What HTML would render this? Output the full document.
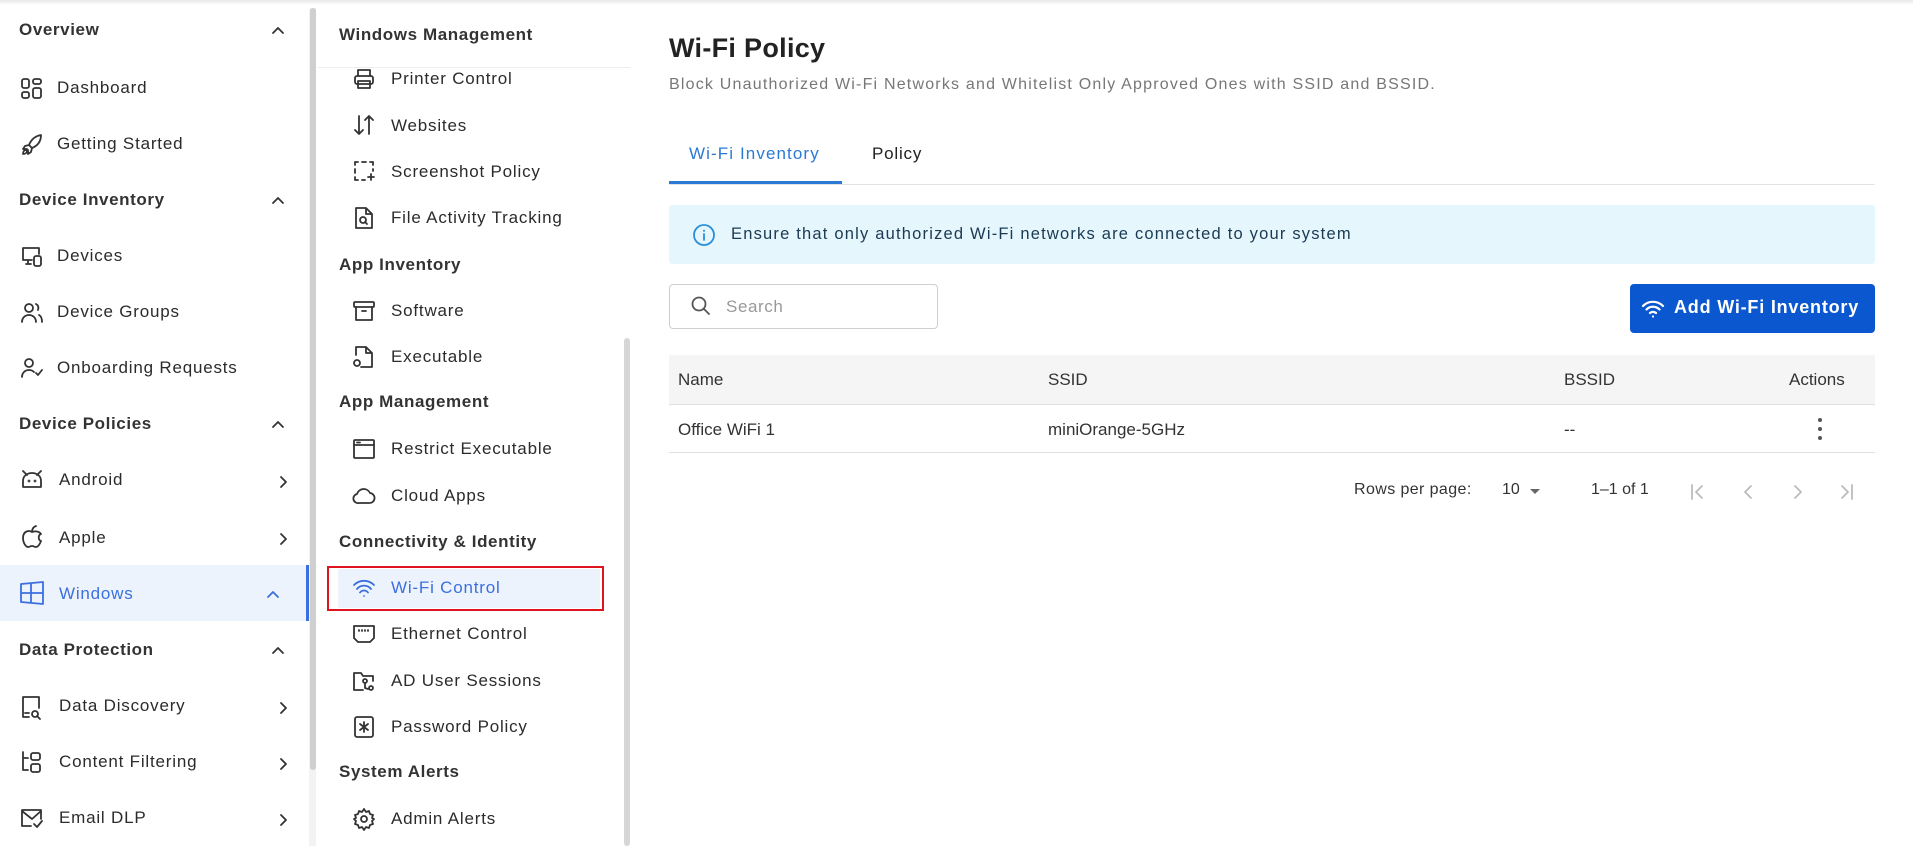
<!DOCTYPE html>
<html><head><meta charset="utf-8"><style>
*{box-sizing:border-box;margin:0;padding:0}
body{width:1913px;height:846px;overflow:hidden;background:#fff;font-family:"Liberation Sans",sans-serif;color:#2b2b2b;position:relative}
.a{position:absolute;white-space:nowrap}
.ls{font-size:17px;line-height:20px;letter-spacing:0.8px}
.hd{font-size:17px;font-weight:bold;color:#333;letter-spacing:0.6px}
svg{position:absolute;fill:none;stroke:#333;stroke-width:1.8;stroke-linecap:round;stroke-linejoin:round}
</style></head><body>
<div class="a" style="left:0;top:0;width:1913px;height:5px;background:linear-gradient(#e8e8e8,#fff)"></div>
<!-- left sidebar -->
<div class="a" style="left:0;top:565px;width:308px;height:56px;background:#edf3fc"></div>
<div class="a" style="left:306px;top:565px;width:4px;height:56px;background:#3b6fe0"></div>
<div class="a" style="left:309px;top:8px;width:7px;height:838px;background:#f3f3f3"></div>
<div class="a" style="left:310px;top:8px;width:6px;height:762px;background:#cfcfcf;border-radius:3px"></div>

<div class="a hd" style="left:19px;top:20px">Overview</div>
<svg style="left:271px;top:25px" width="14" height="10"><path d="M2 8l5-5 5 5"/></svg>
<svg style="left:20px;top:77px" width="24" height="24"><rect x="2" y="2" width="7" height="9" rx="2"/><rect x="13" y="2" width="8" height="5" rx="2"/><rect x="2" y="15" width="7" height="6" rx="2"/><rect x="13" y="11" width="8" height="10" rx="2"/></svg>
<div class="a ls" style="left:57px;top:78px">Dashboard</div>
<svg style="left:20px;top:133px" width="24" height="24"><path d="M21 2c-6 1-10 5-12 10l3 3c5-2 9-6 9-13zM9 12l-4 1-2 3 4 0M12 15l-1 4-3 2 0-4M6 17c-2 0-3 2-3 4 2 0 4-1 4-3"/></svg>
<div class="a ls" style="left:57px;top:134px">Getting Started</div>
<div class="a hd" style="left:19px;top:190px">Device Inventory</div>
<svg style="left:271px;top:195px" width="14" height="10"><path d="M2 8l5-5 5 5"/></svg>
<svg style="left:20px;top:244px" width="24" height="24"><path d="M12 16H3V4h16v6M6 20h5M8 16v4"/><rect x="14" y="12" width="7" height="10" rx="2"/></svg>
<div class="a ls" style="left:57px;top:246px">Devices</div>
<svg style="left:20px;top:301px" width="24" height="24"><circle cx="9" cy="7" r="4"/><path d="M2 21c0-4 3-7 7-7s7 3 7 7M16 3c2 1 3 3 2 6M19 14c2 1 3 4 3 7"/></svg>
<div class="a ls" style="left:57px;top:302px">Device Groups</div>
<svg style="left:20px;top:356px" width="24" height="24"><circle cx="9" cy="7" r="4"/><path d="M2 21c0-4 3-7 7-7 2 0 4 1 5 2M16 17l2 2 4-5"/></svg>
<div class="a ls" style="left:57px;top:358px">Onboarding Requests</div>
<div class="a hd" style="left:19px;top:414px">Device Policies</div>
<svg style="left:271px;top:419px" width="14" height="10"><path d="M2 8l5-5 5 5"/></svg>
<svg style="left:20px;top:469px" width="24" height="20"><path d="M3 18v-6c0-5 4-8 9-8s9 3 9 8v6zM3 2l4 4M21 2l-4 4"/><circle cx="9" cy="12" r=".5"/><circle cx="15" cy="12" r=".5"/></svg>
<div class="a ls" style="left:59px;top:470px">Android</div>
<svg style="left:279px;top:475px" width="10" height="14"><path d="M2 2l5 5-5 5"/></svg>
<svg style="left:20px;top:524px" width="24" height="26"><path d="M12 8c-3-2-9-1-9 6 0 5 3 9 5 9s2-1 4-1 2 1 4 1c2 0 4-3 5-6-3-1-3-6 0-7-2-3-6-3-9-2zM12 8c0-3 1-5 4-6"/></svg>
<div class="a ls" style="left:59px;top:528px">Apple</div>
<svg style="left:279px;top:532px" width="10" height="14"><path d="M2 2l5 5-5 5"/></svg>
<svg style="left:19px;top:580px" width="26" height="26"><path stroke="#3b6fe0" d="M2 4l22-2v22L2 22zM2 13h22M12 3v20"/></svg>
<div class="a ls" style="left:59px;top:584px;color:#3b6fe0">Windows</div>
<svg style="left:266px;top:589px" width="14" height="10"><path stroke="#3b6fe0" d="M2 8l5-5 5 5"/></svg>
<div class="a hd" style="left:19px;top:640px">Data Protection</div>
<svg style="left:271px;top:645px" width="14" height="10"><path d="M2 8l5-5 5 5"/></svg>
<svg style="left:20px;top:695px" width="24" height="26"><path d="M9 22H3V2h16v11"/><circle cx="15" cy="19" r="3"/><path d="M17 21l3 3M5 18h4"/></svg>
<div class="a ls" style="left:59px;top:696px">Data Discovery</div>
<svg style="left:279px;top:701px" width="10" height="14"><path d="M2 2l5 5-5 5"/></svg>
<svg style="left:20px;top:750px" width="24" height="26"><path d="M3 2v18h5M3 8h5"/><rect x="11" y="3" width="9" height="7" rx="2"/><rect x="11" y="14" width="9" height="8" rx="2"/></svg>
<div class="a ls" style="left:59px;top:752px">Content Filtering</div>
<svg style="left:279px;top:757px" width="10" height="14"><path d="M2 2l5 5-5 5"/></svg>
<svg style="left:20px;top:806px" width="24" height="24"><path d="M11 20H2V4h19v9M2 5l10 8 9-8M14 18l3 3 5-6"/></svg>
<div class="a ls" style="left:59px;top:808px">Email DLP</div>
<svg style="left:279px;top:813px" width="10" height="14"><path d="M2 2l5 5-5 5"/></svg>

<!-- second panel -->
<div class="a" style="left:318px;top:67px;width:312px;height:1px;background:#eee"></div>
<div class="a" style="left:624px;top:338px;width:6px;height:508px;background:#d6d6d6;border-radius:3px"></div>
<div class="a hd" style="left:339px;top:25px">Windows Management</div>
<div class="a" style="left:327px;top:566px;width:277px;height:45px;border:2px solid #e0141e;background:#fff"></div>
<div class="a" style="left:338px;top:569px;width:262px;height:39px;background:#edf3fc"></div>

<svg style="left:352px;top:67px" width="24" height="24"><rect x="3" y="9" width="18" height="8" rx="2"/><path d="M6 9V3h12v6M6 14h12v7H6z"/></svg>
<div class="a ls" style="left:391px;top:69px">Printer Control</div>
<svg style="left:352px;top:113px" width="24" height="24"><path d="M7 3v18M3 17l4 4 4-4M17 21V3M13 7l4-4 4 4"/></svg>
<div class="a ls" style="left:391px;top:116px">Websites</div>
<svg style="left:352px;top:159px" width="24" height="24"><path d="M3 6V3h3M10 3h4M18 3h3v3M3 10v4M21 10v2M3 18v3h3M10 21h3M19 15v6M16 18h6"/></svg>
<div class="a ls" style="left:391px;top:162px">Screenshot Policy</div>
<svg style="left:352px;top:206px" width="24" height="24"><path d="M4 2h10l6 6v14H4zM14 2v6h6"/><circle cx="11" cy="14" r="3"/><path d="M13 16l2 2"/></svg>
<div class="a ls" style="left:391px;top:208px">File Activity Tracking</div>
<div class="a hd" style="left:339px;top:255px">App Inventory</div>
<svg style="left:352px;top:299px" width="24" height="24"><rect x="2" y="3" width="20" height="5" rx="1"/><path d="M4 8v13h16V8M10 12h4"/></svg>
<div class="a ls" style="left:391px;top:301px">Software</div>
<svg style="left:352px;top:345px" width="24" height="24"><path d="M4 10V2h10l6 6v14H9M14 2v6h6"/><circle cx="5" cy="18" r="3"/></svg>
<div class="a ls" style="left:391px;top:347px">Executable</div>
<div class="a hd" style="left:339px;top:392px">App Management</div>
<svg style="left:352px;top:437px" width="24" height="24"><rect x="2" y="3" width="20" height="18" rx="1"/><path d="M2 8h20M5 5.5h3"/></svg>
<div class="a ls" style="left:391px;top:439px">Restrict Executable</div>
<svg style="left:352px;top:483px" width="24" height="24"><path d="M7 20h10a5 5 0 0 0 1-10 7 7 0 0 0-13 1 4.5 4.5 0 0 0 2 9z"/></svg>
<div class="a ls" style="left:391px;top:486px">Cloud Apps</div>
<div class="a hd" style="left:339px;top:532px">Connectivity &amp; Identity</div>
<svg style="left:352px;top:576px" width="24" height="24"><path stroke="#3b6fe0" d="M2 9a14 14 0 0 1 20 0M5 13a9 9 0 0 1 14 0M8 16.5a5 5 0 0 1 8 0M12 20h.01"/></svg>
<div class="a ls" style="left:391px;top:578px;color:#3b6fe0">Wi-Fi Control</div>
<svg style="left:352px;top:623px" width="24" height="24"><path d="M2 3h20v12l-4 4H6l-4-4zM7 7v1M10 7v1M13 7v1M16 7v1"/></svg>
<div class="a ls" style="left:391px;top:624px">Ethernet Control</div>
<svg style="left:352px;top:669px" width="24" height="24"><path d="M11 21H2V4h7l2 3h10v5"/><circle cx="13" cy="12" r="2"/><path d="M13 14v5l3 1"/><circle cx="19" cy="19" r="2"/></svg>
<div class="a ls" style="left:391px;top:671px">AD User Sessions</div>
<svg style="left:352px;top:715px" width="24" height="24"><rect x="3" y="2" width="18" height="20" rx="2"/><path d="M12 7v10M8 9l8 6M16 9l-8 6"/></svg>
<div class="a ls" style="left:391px;top:717px">Password Policy</div>
<div class="a hd" style="left:339px;top:762px">System Alerts</div>
<svg style="left:352px;top:807px" width="24" height="24"><circle cx="12" cy="12" r="3"/><path d="M12 2l2 3 3-1 1 3 3 1-1 3 2 1-2 2 1 3-3 1-1 3-3-1-2 3-2-3-3 1-1-3-3-1 1-3-2-2 2-1-1-3 3-1 1-3 3 1z"/></svg>
<div class="a ls" style="left:391px;top:809px">Admin Alerts</div>

<!-- main -->
<div class="a" style="left:669px;top:33px;font-size:27px;font-weight:bold;color:#222;letter-spacing:0.3px">Wi-Fi Policy</div>
<div class="a" style="left:669px;top:76px;font-size:16px;color:#777;letter-spacing:1.2px">Block Unauthorized Wi-Fi Networks and Whitelist Only Approved Ones with SSID and BSSID.</div>
<div class="a" style="left:689px;top:144px;font-size:17px;color:#2a7ad5;letter-spacing:1.1px">Wi-Fi Inventory</div>
<div class="a" style="left:872px;top:144px;font-size:17px;color:#222;letter-spacing:0.8px">Policy</div>
<div class="a" style="left:669px;top:184px;width:1206px;height:1px;background:#e2e2e2"></div>
<div class="a" style="left:669px;top:181px;width:173px;height:3px;background:#2a7ad5"></div>
<div class="a" style="left:669px;top:205px;width:1206px;height:59px;background:#e5f6fd;border-radius:3px"></div>
<svg style="left:692px;top:223px" width="24" height="24"><circle stroke="#2a8fd8" cx="12" cy="12" r="10"/><path stroke="#2a8fd8" d="M12 11v6M12 7.5v.5"/></svg>
<div class="a" style="left:731px;top:225px;font-size:16.5px;color:#1a3a52;letter-spacing:1.2px">Ensure that only authorized Wi-Fi networks are connected to your system</div>
<div class="a" style="left:669px;top:284px;width:269px;height:45px;border:1px solid #cfcfcf;border-radius:4px"></div>
<svg style="left:689px;top:294px" width="24" height="24"><circle stroke="#555" cx="10" cy="10" r="6.5"/><path stroke="#555" d="M15 15l5 5"/></svg>
<div class="a" style="left:726px;top:297px;font-size:17px;color:#999;letter-spacing:0.6px">Search</div>
<div class="a" style="left:1630px;top:284px;width:245px;height:49px;background:#0b57d0;border-radius:4px"></div>
<svg style="left:1640px;top:296px" width="26" height="24"><path stroke="#fff" stroke-width="2.2" d="M3 10a14 14 0 0 1 20 0M6.5 13.5a9 9 0 0 1 13 0M10 17a4.5 4.5 0 0 1 6 0M13 20.5h.01"/></svg>
<div class="a" style="left:1674px;top:297px;font-size:18px;font-weight:bold;color:#fff;letter-spacing:0.8px">Add Wi-Fi Inventory</div>
<div class="a" style="left:669px;top:355px;width:1206px;height:50px;background:#f5f5f5;border-bottom:1px solid #e0e0e0"></div>
<div class="a" style="left:678px;top:370px;font-size:17px;color:#333">Name</div>
<div class="a" style="left:1048px;top:370px;font-size:17px;color:#333">SSID</div>
<div class="a" style="left:1564px;top:370px;font-size:17px;color:#333">BSSID</div>
<div class="a" style="left:1789px;top:370px;font-size:17px;color:#333">Actions</div>
<div class="a" style="left:669px;top:452px;width:1206px;height:1px;background:#e0e0e0"></div>
<div class="a" style="left:678px;top:420px;font-size:17px;color:#333">Office WiFi 1</div>
<div class="a" style="left:1048px;top:420px;font-size:17px;color:#333">miniOrange-5GHz</div>
<div class="a" style="left:1564px;top:420px;font-size:17px;color:#333">--</div>
<div class="a" style="left:1818px;top:418px;width:4px;height:4px;border-radius:2px;background:#555"></div>
<div class="a" style="left:1818px;top:427px;width:4px;height:4px;border-radius:2px;background:#555"></div>
<div class="a" style="left:1818px;top:436px;width:4px;height:4px;border-radius:2px;background:#555"></div>
<div class="a" style="left:1354px;top:481px;font-size:16px;color:#333;letter-spacing:0.4px">Rows per page:</div>
<div class="a" style="left:1502px;top:481px;font-size:16px;color:#333">10</div>
<div class="a" style="left:1530px;top:489px;width:0;height:0;border-left:5px solid transparent;border-right:5px solid transparent;border-top:5px solid #666"></div>
<div class="a" style="left:1591px;top:481px;font-size:16px;color:#333">1–1 of 1</div>
<svg style="left:1688px;top:482px" width="20" height="20"><path stroke="#bbb" d="M4 3v14M14 4l-6 6 6 6"/></svg>
<svg style="left:1738px;top:482px" width="20" height="20"><path stroke="#bbb" d="M13 4l-6 6 6 6"/></svg>
<svg style="left:1788px;top:482px" width="20" height="20"><path stroke="#bbb" d="M7 4l6 6-6 6"/></svg>
<svg style="left:1836px;top:482px" width="20" height="20"><path stroke="#bbb" d="M16 3v14M6 4l6 6-6 6"/></svg>
</body></html>
